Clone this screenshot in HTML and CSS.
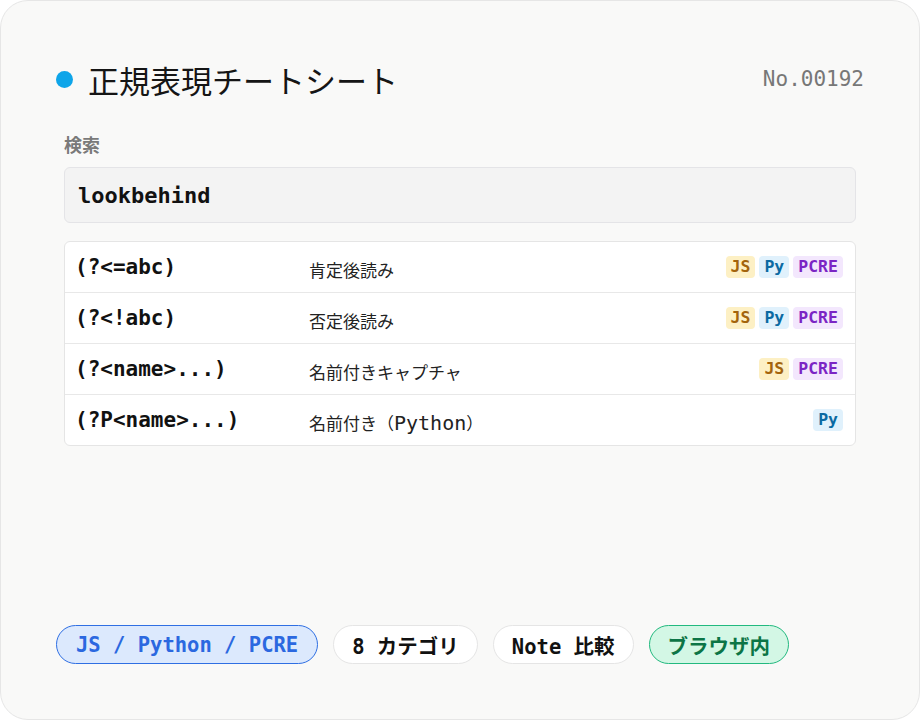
FILE: index.html
```html
<!DOCTYPE html>
<html lang="ja">
<head>
    <meta charset="UTF-8">
    <meta name="viewport" content="width=device-width, initial-scale=1.0">
    <title>正規表現チートシート</title>
    <link rel="stylesheet" href="styles.css">
</head>
<body>
    <div class="sheet">
        <div class="sheet-head">
            <h1 class="title"><span class="dot"></span>正規表現チートシート</h1>
            <span class="serial">No.00192</span>
        </div>

        <div class="search">
            <label class="search-label" for="q">検索</label>
            <div class="search-box" id="q">lookbehind</div>

            <div class="results">
                <div class="row">
                    <span class="code">(?&lt;=abc)</span>
                    <span class="desc">肯定後読み</span>
                    <span class="tags"><b class="tag js">JS</b><b class="tag py">Py</b><b class="tag pcre">PCRE</b></span>
                </div>
                <div class="row">
                    <span class="code">(?&lt;!abc)</span>
                    <span class="desc">否定後読み</span>
                    <span class="tags"><b class="tag js">JS</b><b class="tag py">Py</b><b class="tag pcre">PCRE</b></span>
                </div>
                <div class="row">
                    <span class="code">(?&lt;name&gt;...)</span>
                    <span class="desc">名前付きキャプチャ</span>
                    <span class="tags"><b class="tag js">JS</b><b class="tag pcre">PCRE</b></span>
                </div>
                <div class="row">
                    <span class="code">(?P&lt;name&gt;...)</span>
                    <span class="desc">名前付き（<span class="en">Python</span>）</span>
                    <span class="tags"><b class="tag py">Py</b></span>
                </div>
            </div>
        </div>

        <div class="sheet-foot">
            <span class="pill pill-blue">JS / Python / PCRE</span>
            <span class="pill">8 カテゴリ</span>
            <span class="pill">Note 比較</span>
            <span class="pill pill-green">ブラウザ内</span>
        </div>
    </div>
</body>
</html>
```

FILE: styles.css
```css
/* page */
body {
    margin: 0;
    background: #fff;
    font-family: "DejaVu Sans Mono", "Noto Sans CJK JP", monospace;
    color: #111;
}
.sheet {
    box-sizing: border-box;
    width: 920px;
    height: 720px;
    padding: 55px;
    background: #f9f9f8;
    border: 1px solid #e6e6e6;
    border-radius: 28px;
    display: flex;
    flex-direction: column;
}

/* header */
.sheet-head {
    display: flex;
    justify-content: space-between;
    align-items: center;
    height: 46px;
}
.title {
    display: flex;
    align-items: center;
    gap: 15px;
    margin: 0;
    font-family: "Noto Sans CJK JP", sans-serif;
    font-size: 31px;
    font-weight: 400;
    color: #151515;
}
.dot {
    width: 17px;
    height: 17px;
    border-radius: 50%;
    background: #0ea5e9;
}
.serial {
    font-size: 21px;
    color: #777;
}

/* search */
.search {
    padding: 0 8px;
}
.search-label {
    display: block;
    margin-top: 30px;
    font-family: "Noto Sans CJK JP", sans-serif;
    font-size: 18px;
    line-height: 24px;
    font-weight: 700;
    color: #7a7a7a;
}
.search-box {
    margin-top: 11px;
    height: 56px;
    padding: 0 13px;
    display: flex;
    align-items: center;
    background: #f3f3f3;
    border: 1px solid #e4e4e7;
    border-radius: 6px;
    box-sizing: border-box;
    font-size: 22px;
    font-weight: 700;
    color: #111;
}
.results {
    margin-top: 18px;
    background: #fff;
    border: 1px solid #e5e5e5;
    border-radius: 6px;
}
.row {
    display: grid;
    grid-template-columns: 234px 1fr auto;
    align-items: center;
    height: 50px;
    padding: 0 12px 0 10px;
    border-bottom: 1px solid #e8e8e8;
}
.row:last-child {
    border-bottom: none;
}
.code {
    font-size: 21px;
    font-weight: 700;
    color: #111;
}
.desc {
    font-family: "Noto Sans CJK JP", sans-serif;
    font-size: 17px;
    color: #222;
    padding-top: 4px;
}
.desc .en {
    font-family: "DejaVu Sans Mono", monospace;
    font-size: 20px;
}
.tags {
    display: flex;
    gap: 4px;
}
.tag {
    padding: 0 5px;
    height: 22px;
    line-height: 22px;
    border-radius: 4px;
    font-size: 16.5px;
    font-weight: 700;
}
.js { background: #fdf0c4; color: #a3640c; }
.py { background: #e0f1fc; color: #0b6aa2; }
.pcre { background: #f3e7fd; color: #7b25c4; }

/* footer */
.sheet-foot {
    margin-top: auto;
    display: flex;
    gap: 15px;
}
.pill {
    height: 39px;
    box-sizing: border-box;
    padding: 0 18px;
    display: flex;
    align-items: center;
    background: #fff;
    border: 1px solid #e5e5e5;
    border-radius: 20px;
    font-size: 20.5px;
    font-weight: 700;
    color: #111;
}
.pill-blue {
    padding: 0 19px;
    background: #dce9fd;
    border-color: #2f6fe3;
    color: #2b68e0;
}
.pill-green {
    background: #d3f7e5;
    border-color: #22b97f;
    color: #0c7546;
}
```
